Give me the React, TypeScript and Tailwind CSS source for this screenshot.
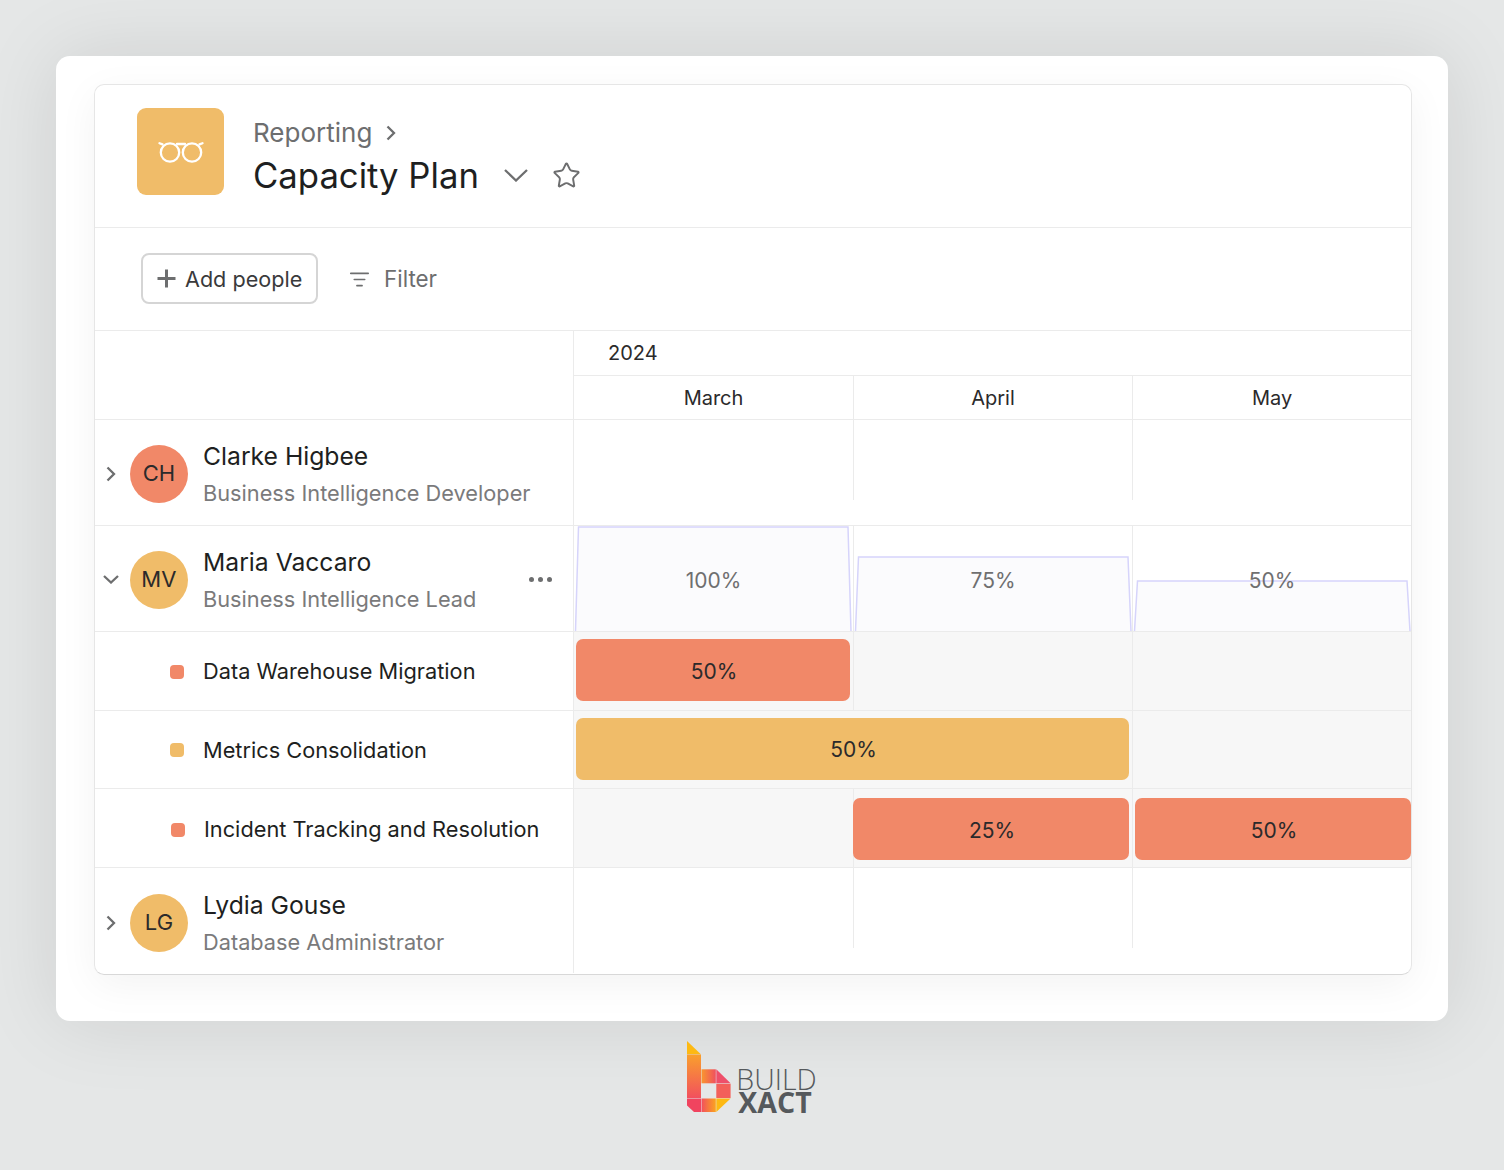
import { ListFilter, Star } from "lucide-react";

const monthGrid = "grid flex-1 grid-cols-[280px_279px_278px]";

function Glasses() {
  return (
    <svg width="46" height="22" viewBox="0 0 46 22" fill="none" stroke="#fff" strokeWidth="2.3" strokeLinecap="round">
      <circle cx="12" cy="11.5" r="9.2" />
      <circle cx="34" cy="11.5" r="9.2" />
      <path d="M1.5 2.2 L4.5 3.4 M19 3 H27 M44.5 2.2 L41.5 3.4" />
    </svg>
  );
}

function ChevronR({ className }: { className?: string }) {
  return (
    <svg width="10" height="16" viewBox="0 0 10 16" fill="none" stroke="currentColor" strokeWidth="2.3" className={className}>
      <path d="M1.5 1.5 L8 8 L1.5 14.5" />
    </svg>
  );
}

function ChevronD({ width, height, className }: { width: number; height: number; className?: string }) {
  return (
    <svg width={width} height={height} viewBox={`0 0 ${width} ${height}`} fill="none" stroke="currentColor" strokeWidth="2.3" className={className}>
      <path d={`M1 1 L${width / 2} ${height - 1.5} L${width - 1} 1`} />
    </svg>
  );
}

function Logo() {
  return (
    <svg width="44" height="72" viewBox="0 0 44 72" className="shrink-0">
      <defs>
        <linearGradient id="stem" x1="0" y1="0" x2="0" y2="1">
          <stop offset="0" stopColor="#f9a02c" />
          <stop offset="1" stopColor="#f2505e" />
        </linearGradient>
        <linearGradient id="bowl" x1="0" y1="0" x2="1" y2="0">
          <stop offset="0" stopColor="#f9962e" />
          <stop offset="1" stopColor="#f0505f" />
        </linearGradient>
        <linearGradient id="foot" x1="0" y1="0" x2="1" y2="0">
          <stop offset="0" stopColor="#f2505e" />
          <stop offset="1" stopColor="#fba41f" />
        </linearGradient>
      </defs>
      <path d="M0 0 L13.6 13 H0 Z" fill="#fdb913" />
      <rect x="0" y="13.4" width="14" height="43.6" fill="url(#stem)" />
      <rect x="14.5" y="28.3" width="14.3" height="14" fill="url(#bowl)" />
      <path d="M29.3 28.3 L43.6 42.3 H29.3 Z" fill="#ee4f6a" />
      <rect x="29.3" y="42.8" width="14.3" height="14.2" fill="#f3605a" />
      <path d="M0 57.5 H14 V71 H7 L0 64.5 Z" fill="#f0445f" />
      <rect x="14.5" y="57.5" width="14.3" height="13.5" fill="url(#foot)" />
      <path d="M29.3 57.5 H43.6 L29.3 71 Z" fill="#fdb913" />
    </svg>
  );
}

function Avatar({ initials, color }: { initials: string; color: string }) {
  return (
    <div className={`flex h-[58px] w-[58px] shrink-0 items-center justify-center rounded-full text-[22px] tracking-[0.1px] text-[#2b2a2b] ${color}`}>
      {initials}
    </div>
  );
}

function PersonCell({
  name,
  role,
  initials,
  color,
  open,
  more,
  pad = "pt-[2px]",
}: {
  name: string;
  role: string;
  initials: string;
  color: string;
  open?: boolean;
  more?: boolean;
  pad?: string;
}) {
  return (
    <div className={`flex w-[479px] shrink-0 items-center border-r border-[#ebebeb] pl-[5px] ${pad}`}>
      <div className="flex w-[21px] shrink-0 justify-center text-[#6d6e6f]">
        {open ? <ChevronD width={16} height={9} /> : <ChevronR />}
      </div>
      <div className="ml-[9px]">
        <Avatar initials={initials} color={color} />
      </div>
      <div className="ml-[15px] flex flex-col gap-[8px]">
        <span className="text-[24.7px] leading-[30px] text-[#1e1f21]">{name}</span>
        <span className="text-[21.75px] leading-[28px] text-[#7a7a7b]">{role}</span>
      </div>
      {more && (
        <div className="ml-auto mr-[21px] flex gap-[4px]">
          <span className="h-[5px] w-[5px] rounded-full bg-[#6d6e6f]" />
          <span className="h-[5px] w-[5px] rounded-full bg-[#6d6e6f]" />
          <span className="h-[5px] w-[5px] rounded-full bg-[#6d6e6f]" />
        </div>
      )}
    </div>
  );
}

function EmptyMonths() {
  return (
    <div className={monthGrid}>
      <div className="h-[80px] border-r border-[#ebebeb]" />
      <div className="h-[80px] border-r border-[#ebebeb]" />
      <div className="h-[80px]" />
    </div>
  );
}

function CapacityCell({ top, label, last }: { top: number; label: string; last?: boolean }) {
  return (
    <div className={`relative flex items-center justify-center ${last ? "" : "border-r border-[#ebebeb]"}`}>
      <svg width="279" height="105" viewBox="0 0 279 105" className="absolute left-0 top-0">
        <path d={`M1.5 105 L4.5 ${top} H274 L277 105`} fill="#fbfbfd" stroke="#d6d4fb" strokeWidth="1.5" />
      </svg>
      <span className="relative mt-[5px] text-[21px] text-[#6f6f70]">{label}</span>
    </div>
  );
}

function Bar({ color, label }: { color: string; label: string }) {
  return (
    <div className={`flex h-[62px] w-full items-center justify-center rounded-[7px] pl-[2px] pt-[3px] text-[21px] text-[#2b2a2b] ${color}`}>
      {label}
    </div>
  );
}

function TaskLabel({ color, label, pad = "pl-[75px] pt-[1px]" }: { color: string; label: string; pad?: string }) {
  return (
    <div className={`flex w-[479px] shrink-0 items-center border-r border-[#ebebeb] bg-white ${pad}`}>
      <span className={`h-[14px] w-[14px] rounded-[4px] ${color}`} />
      <span className="ml-[19px] text-[21.75px] text-[#1e1f21]">{label}</span>
    </div>
  );
}

export default function App() {
  return (
    <div className="flex h-[1170px] w-[1504px] flex-col items-center bg-[#e5e7e7] pt-[56px] [font-family:Inter,sans-serif]">
      <div className="h-[965px] w-[1392px] rounded-[14px] bg-white pl-[38px] pt-[28px] shadow-[0_0_80px_rgba(0,0,0,0.1)]">
        <div className="h-[891px] w-[1318px] overflow-hidden rounded-[10px] border border-[#e6e6e6] border-b-[#d8d8d8] shadow-[0_10px_40px_rgba(0,0,0,0.05)]">
          {/* Header */}
          <div className="flex h-[143px] items-start border-b border-[#ebebeb] pl-[42px] pt-[23px]">
            <div className="flex h-[87px] w-[87px] items-center justify-center rounded-[9px] bg-[#f0bc69]">
              <Glasses />
            </div>
            <div className="ml-[29px] mt-[7px] flex flex-col">
              <div className="flex items-center gap-[14px] text-[26px] leading-[36px] text-[#6d6e6f]">
                Reporting
                <ChevronR />
              </div>
              <div className="mt-[1px] flex items-center">
                <span className="text-[34.7px] leading-[46px] text-[#1e1f21]">Capacity Plan</span>
                <ChevronD width={24} height={13} className="ml-[25px] text-[#6d6e6f]" />
                <Star size={29} strokeWidth={1.6} className="ml-[24px] text-[#6d6e6f]" />
              </div>
            </div>
          </div>

          {/* Toolbar */}
          <div className="flex h-[103px] items-center border-b border-[#ebebeb] pb-[2px] pl-[46px]">
            <button className="flex h-[51px] w-[177px] items-center rounded-[8px] border-2 border-[#d5d5d5] pl-[14px] text-[21.6px] text-[#3a3a3b]">
              <svg width="19" height="19" viewBox="0 0 19 19" stroke="#6d6e6f" strokeWidth="3">
                <path d="M9.5 0.5 V18.5 M0.5 9.5 H18.5" />
              </svg>
              <span className="ml-[9px] mt-[2px]">Add people</span>
            </button>
            <ListFilter size={21} strokeWidth={1.8} className="ml-[31px] mt-[2px] text-[#6d6e6f]" />
            <span className="ml-[14px] mt-[2px] text-[22.4px] text-[#6d6e6f]">Filter</span>
          </div>

          {/* Timeline header */}
          <div className="flex h-[89px] border-b border-[#ebebeb]">
            <div className="w-[479px] shrink-0 border-r border-[#ebebeb]" />
            <div className="flex flex-1 flex-col">
              <div className="flex h-[45px] items-center border-b border-[#ebebeb] pl-[34px] text-[20px] text-[#2b2a2b]">2024</div>
              <div className={`${monthGrid} text-[20px] text-[#2b2a2b]`}>
                <div className="flex items-center justify-center border-r border-[#ebebeb]">March</div>
                <div className="flex items-center justify-center border-r border-[#ebebeb]">April</div>
                <div className="flex items-center justify-center">May</div>
              </div>
            </div>
          </div>

          {/* Clarke */}
          <div className="flex h-[106px] border-b border-[#ebebeb]">
            <PersonCell name="Clarke Higbee" role="Business Intelligence Developer" initials="CH" color="bg-[#f18868]" />
            <EmptyMonths />
          </div>

          {/* Maria */}
          <div className="flex h-[106px] border-b border-[#ebebeb]">
            <PersonCell name="Maria Vaccaro" role="Business Intelligence Lead" initials="MV" color="bg-[#f0bc69]" open more />
            <div className={monthGrid}>
              <CapacityCell top={1} label="100%" />
              <CapacityCell top={31} label="75%" />
              <CapacityCell top={55} label="50%" last />
            </div>
          </div>

          {/* Data Warehouse */}
          <div className="flex h-[79px] border-b border-[#ebebeb]">
            <TaskLabel color="bg-[#f18868]" label="Data Warehouse Migration" />
            <div className={`${monthGrid} bg-[#f7f7f7]`}>
              <div className="flex items-center border-r border-[#ebebeb] pb-[2px] pl-[2px] pr-[3px]">
                <Bar color="bg-[#f18868]" label="50%" />
              </div>
              <div className="border-r border-[#ebebeb]" />
              <div />
            </div>
          </div>

          {/* Metrics */}
          <div className="flex h-[78px] border-b border-[#ebebeb]">
            <TaskLabel color="bg-[#f0bc69]" label="Metrics Consolidation" />
            <div className={`${monthGrid} bg-[#f7f7f7]`}>
              <div className="col-span-2 flex items-center border-r border-[#ebebeb] pb-[2px] pl-[2px] pr-[3px]">
                <Bar color="bg-[#f0bc69]" label="50%" />
              </div>
              <div />
            </div>
          </div>

          {/* Incident */}
          <div className="flex h-[79px] border-b border-[#ebebeb]">
            <TaskLabel color="bg-[#f18868]" label="Incident Tracking and Resolution" pad="pl-[76px] pt-[3px]" />
            <div className={`${monthGrid} bg-[#f7f7f7]`}>
              <div className="border-r border-[#ebebeb]" />
              <div className="-ml-[1px] flex items-center border-r border-[#ebebeb] pr-[3px] pt-[2px]">
                <Bar color="bg-[#f18868]" label="25%" />
              </div>
              <div className="flex items-center pl-[2px] pt-[2px]">
                <Bar color="bg-[#f18868]" label="50%" />
              </div>
            </div>
          </div>

          {/* Lydia */}
          <div className="flex h-[105px]">
            <PersonCell name="Lydia Gouse" role="Database Administrator" initials="LG" color="bg-[#f0bc69]" pad="pt-[4px]" />
            <EmptyMonths />
          </div>
        </div>
      </div>

      {/* Logo */}
      <div className="mt-[20px] flex items-start">
        <Logo />
        <div className="ml-[5px] mt-[27px] flex flex-col text-[#55595c] [font-family:'Open_Sans',sans-serif]">
          <span className="text-[28.5px] font-light leading-[23px]">BUILD</span>
          <span className="ml-[2px] text-[28.5px] font-bold leading-[23px]">XACT</span>
        </div>
      </div>
    </div>
  );
}
